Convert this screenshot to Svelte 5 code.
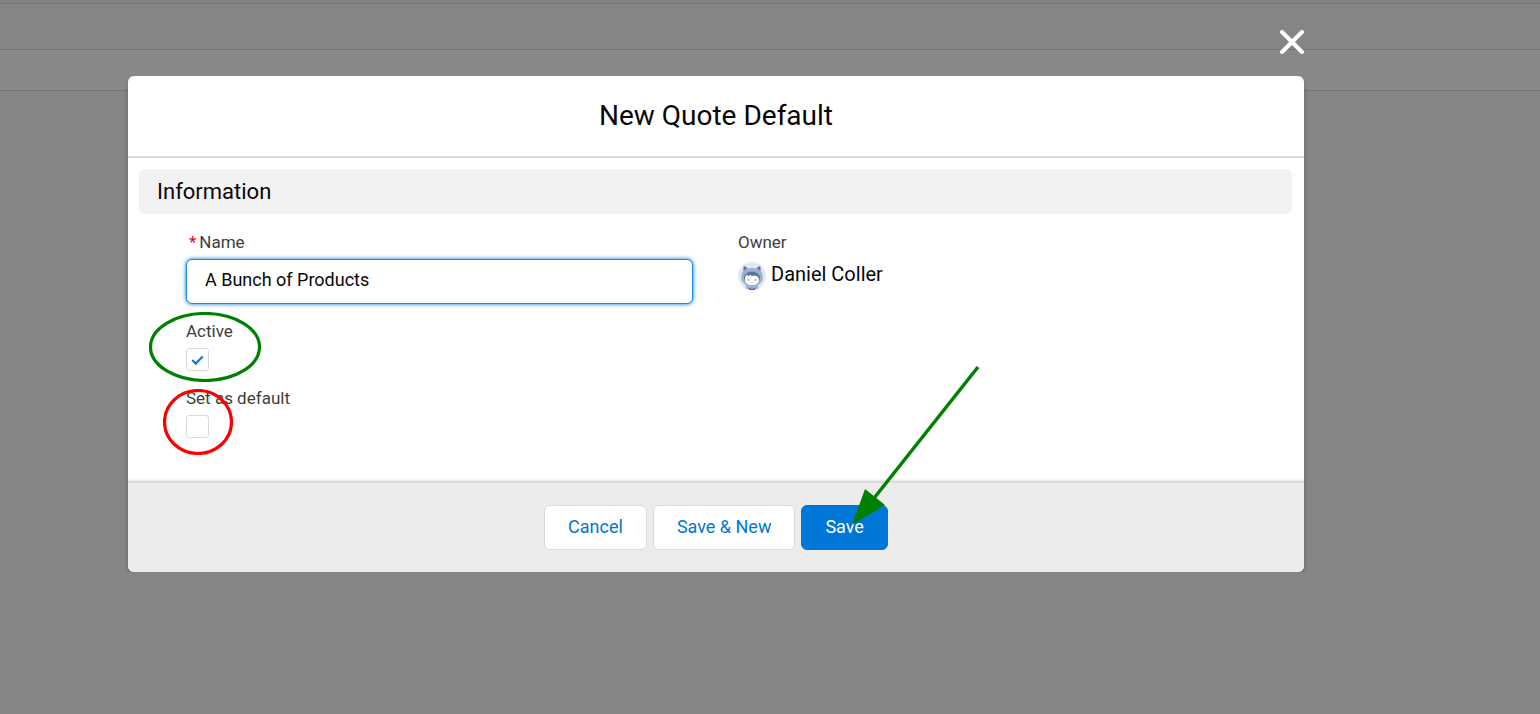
<script lang="ts">
	let name = $state('A Bunch of Products');
	let active = $state(true);
	let isDefault = $state(false);

	const owner = 'Daniel Coller';
</script>

<div class="page">
	<div class="strip top"></div>
	<div class="strip nav"></div>
	<div class="strip tabs"></div>
</div>

<div class="backdrop">
	<div class="close-row">
		<button type="button" class="close" aria-label="Close">
			<svg viewBox="0 0 24 24" width="24" height="24" aria-hidden="true">
				<path d="M2 2 L22 22 M22 2 L2 22" fill="none" stroke="#fff" stroke-width="4" stroke-linecap="round" />
			</svg>
		</button>
	</div>

	<form class="modal" role="dialog" aria-labelledby="modal-title" onsubmit={(e) => e.preventDefault()}>
		<header>
			<h1 id="modal-title">New Quote Default</h1>
		</header>

		<div class="body">
			<h2>Information</h2>
			<div class="fields">
				<div class="column">
					<div class="field">
						<label class="required" for="name"><abbr title="required">*</abbr>Name</label>
						<input id="name" class="text" type="text" bind:value={name} />
					</div>
					<div class="field check">
						<label for="active">Active</label>
						<input id="active" type="checkbox" bind:checked={active} />
						<svg class="ring active-ring" viewBox="0 0 112 70" width="112" height="70" aria-hidden="true">
							<ellipse cx="56" cy="35" rx="54.500" ry="33.500" fill="none" stroke="#008000" stroke-width="3.200" />
						</svg>
					</div>
					<div class="field check">
						<label for="default">Set as default</label>
						<input id="default" type="checkbox" bind:checked={isDefault} />
						<svg class="ring default-ring" viewBox="0 0 70 66" width="70" height="66" aria-hidden="true">
							<ellipse cx="35" cy="33" rx="33.500" ry="31.500" fill="none" stroke="#f00" stroke-width="3.200" />
						</svg>
					</div>
				</div>

				<div class="column">
					<div class="field">
						<span class="label">Owner</span>
						<div class="owner">
							<svg viewBox="0 0 28 28" width="28" height="28" aria-hidden="true">
								<clipPath id="avatar"><circle cx="14" cy="14" r="14" /></clipPath>
								<g clip-path="url(#avatar)">
									<rect width="28" height="28" fill="#e4e8ee" />
									<path d="M5.500 5 Q6 3.500 8 5 L11 8 L5.500 10 Z M22.500 5 Q22 3.500 20 5 L17 8 L22.500 10 Z" fill="#5876a3" />
									<path d="M5 9 Q8 6 14 6 Q20 6 23 9 Q26 15 24 19 Q21 24.500 14 24.500 Q7 24.500 4 19 Q2 15 5 9 Z" fill="#9db2d3" />
									<path d="M7 28 L9 22 H19 L21 28 Z" fill="#9db2d3" />
									<ellipse cx="14" cy="16" rx="8" ry="6.500" fill="#5a76a2" />
									<path d="M7 17 Q7 13.500 9 13 Q11 15 12 12.500 Q14 15 16 13.500 Q20 13.500 21 17 Q21 23 14 23 Q7 23 7 17 Z" fill="#fff" />
									<circle cx="10.500" cy="18" r="0.800" fill="#5a76a2" />
									<circle cx="17.500" cy="18" r="0.800" fill="#5a76a2" />
									<path d="M12.500 20.500 Q14 21.500 15.500 20.500" fill="none" stroke="#c9d4e6" />
									<path d="M11 26 L14 27 L17 26 V29 H11 Z" fill="#3f6095" />
								</g>
							</svg>
							<span>{owner}</span>
						</div>
					</div>
				</div>
			</div>
		</div>

		<footer>
			<button type="button">Cancel</button>
			<button type="button">Save &amp; New</button>
			<div class="save">
				<button type="submit" class="brand">Save</button>
				<svg class="arrow" viewBox="0 0 130 162" width="130" height="162" aria-hidden="true">
					<path d="M127 3 L20 138" fill="none" stroke="#008000" stroke-width="3.500" />
					<path d="M1 161 L14 125 L34 141 Z" fill="#008000" />
				</svg>
			</div>
		</footer>
	</form>
</div>

<style>
	:global(body) {
		font-family: Roboto, "Liberation Sans", sans-serif;
		background: #858585;
		color: #080707;
	}

	.page {
		position: absolute;
		inset: 0 0 auto;
	}

	.strip {
		box-sizing: border-box;
		border-bottom: 1px solid #757374;
	}

	.top {
		height: 4px;
		background: #858182;
	}

	.nav {
		height: 46px;
	}

	.tabs {
		height: 41px;
		background: #888;
	}

	.backdrop {
		position: relative;
		padding: 30px 236px 0 128px;
	}

	.close-row {
		display: flex;
		justify-content: flex-end;
		padding-bottom: 22px;
	}

	.close {
		display: block;
		height: 24px;
		padding: 0;
		border: 0;
		background: none;
		cursor: pointer;
	}

	.close svg {
		display: block;
	}

	.modal {
		border-radius: 6px;
		background: #fff;
		box-shadow: 0 3px 5px rgba(0, 0, 0, 0.2);
	}

	header {
		padding: 22px;
		border-bottom: 2px solid #dddbda;
		text-align: center;
	}

	h1 {
		margin: 0;
		font-size: 28px;
		font-weight: 400;
		line-height: 36px;
	}

	.body {
		padding: 11px 12px 43px 11px;
	}

	h2 {
		margin: 0;
		padding: 0 18px;
		border-radius: 6px;
		background: #f2f2f2;
		font-size: 22px;
		font-weight: 400;
		line-height: 45px;
	}

	.fields {
		display: grid;
		grid-template-columns: 1fr 1fr;
		padding: 18px 2px 0 47px;
	}

	.column {
		padding-right: 45px;
	}

	.field {
		position: relative;
	}

	label,
	.label {
		display: block;
		color: #3e3e3c;
		font-size: 17px;
		line-height: 20px;
	}

	.required {
		padding-left: 3px;
	}

	abbr {
		margin-right: 3px;
		color: #e4002b;
		text-decoration: none;
	}

	.text {
		box-sizing: border-box;
		display: block;
		width: 100%;
		height: 45px;
		margin-top: 7px;
		padding: 0 18px 4px;
		border: 1px solid #1589ee;
		border-radius: 6px;
		outline: 0;
		background: #fff;
		box-shadow: 0 0 4px #0070d2;
		color: #080707;
		font: 18px Roboto, "Liberation Sans", sans-serif;
	}

	.check {
		padding-top: 17px;
	}

	input[type='checkbox'] {
		appearance: none;
		display: grid;
		place-content: center;
		width: 23px;
		height: 23px;
		margin: 7px 0 0;
		border: 1px solid #dddbda;
		border-radius: 3px;
		background: #fff;
	}

	input[type='checkbox']:checked::before {
		content: '';
		width: 9px;
		height: 4px;
		border: solid #0076d6;
		border-width: 0 0 2px 2px;
		transform: translateY(-1px) rotate(-45deg);
	}

	.ring {
		position: absolute;
		pointer-events: none;
	}

	.active-ring {
		top: 8px;
		left: -37px;
	}

	.default-ring {
		top: 18px;
		left: -23px;
	}

	.owner {
		display: flex;
		gap: 5px;
		margin-top: 10px;
		font-size: 20px;
		line-height: 24px;
	}

	footer {
		display: flex;
		justify-content: center;
		gap: 6px;
		padding: 22px;
		border-top: 2px solid #dddbda;
		border-radius: 0 0 6px 6px;
		background: #ececeb;
		box-shadow: 0 -1px 2px rgba(0, 0, 0, 0.12);
	}

	footer button {
		height: 45px;
		padding: 0 23px 2px;
		border: 1px solid #dddbda;
		border-radius: 6px;
		background: #fff;
		color: #0076d6;
		font: 18px Roboto, "Liberation Sans", sans-serif;
		cursor: pointer;
	}

	footer .brand {
		display: block;
		border-color: #0076d6;
		background: #0076d6;
		color: #fff;
	}

	.save {
		position: relative;
	}

	.arrow {
		position: absolute;
		bottom: 24px;
		left: 50px;
		pointer-events: none;
	}
</style>
